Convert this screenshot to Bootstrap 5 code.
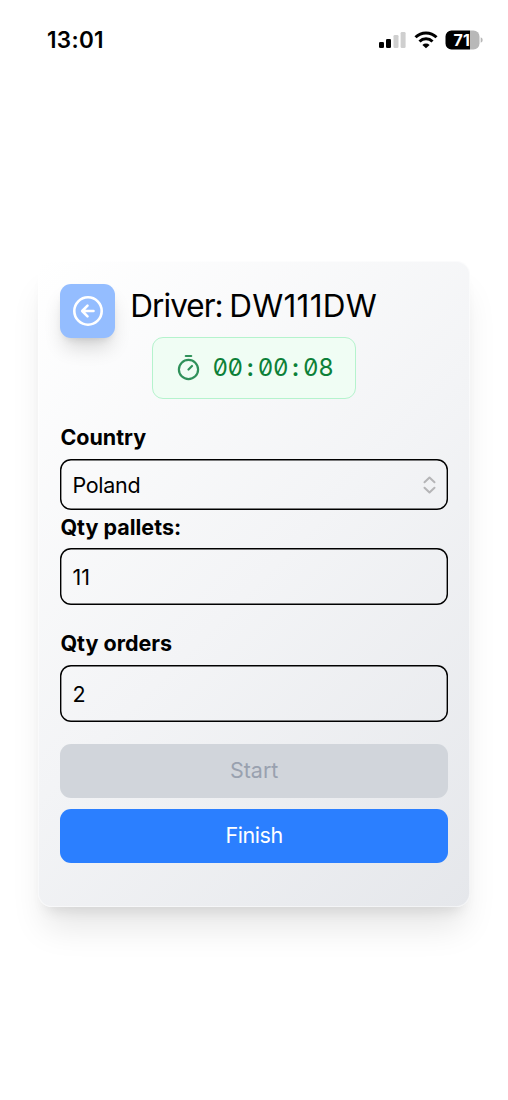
<!DOCTYPE html>
<html lang="en">
<head>
<meta charset="utf-8">
<meta name="viewport" content="width=device-width, initial-scale=1">
<title>Driver</title>
<link rel="stylesheet" href="https://cdn.jsdelivr.net/npm/bootstrap@5.3.0/dist/css/bootstrap.min.css">
<style>
body{font-family:Inter,"Liberation Sans",sans-serif;color:#000;background:#fff;height:1100px;overflow:hidden;font-size:21.5px}
.statusbar{height:80px;padding:0 25px 0 47px}
.clock{font-size:22.5px;font-weight:600;line-height:26px;letter-spacing:.3px}
.panel{margin:181px 38px 0;width:432px;height:646px;padding:22px 21.4px;border:1px solid rgba(255,255,255,.5);border-radius:14px;background:linear-gradient(135deg,#fff 0%,#f3f4f6 50%,#e5e7eb 100%);background-origin:border-box;box-shadow:0 27px 34px -7px rgba(0,0,0,.1),0 11px 14px -8px rgba(0,0,0,.1)}
.back{width:54.4px;height:54.4px;border:0;border-radius:11px;background:#94bdff;box-shadow:0 13px 20px -4px rgba(0,0,0,.16),0 5px 8px -5px rgba(0,0,0,.14)}
.title{font-size:31.5px;line-height:44px;font-weight:400;margin:0 0 0 15.5px;white-space:nowrap}
.title-key{letter-spacing:-.95px}
.title-id{letter-spacing:.25px;margin-left:6.5px}
.timer{width:204px;height:62px;margin:-1px auto 0;border:1px solid #b5f3cd;border-radius:11px;background:#f0fdf4;color:#0c8038}
.digits{font-size:24px;line-height:32px;font-feature-settings:"tnum","zero"}
.digits span{display:inline-block;width:15.1px;text-align:center}
.digits .sep{font-weight:600}
.field-label{font-weight:700;line-height:30px;font-size:21.5px;display:block}
.field{box-shadow:inset 0 0 0 1.4px #000;border-radius:11px;background:transparent;padding:1px 12px 0;width:387.5px}
.field>span{letter-spacing:-.3px}
.action{height:54px;border:0;border-radius:11px;width:387.5px;font-size:21.5px;padding:0}
.action.start{background:#d1d5db;color:#99a1af}
.action.finish{background:#2b7fff;color:#fff;margin-top:11px;letter-spacing:-.4px}
</style>
</head>
<body>
<header class="statusbar d-flex align-items-center justify-content-between">
<span class="clock">13:01</span>
<div class="d-flex align-items-center">
<svg width="28" height="20" viewBox="0 0 28 20"><rect x="1" y="12" width="5" height="6" rx="1.3"/><rect x="8" y="9" width="5" height="9" rx="1.3"/><rect x="15.500" y="5" width="5" height="13" rx="1.3" fill="#cfcfcf"/><rect x="22.600" y="2" width="5" height="16" rx="1.3" fill="#cfcfcf"/></svg>
<svg class="ms-2" width="24" height="20" viewBox="0 0 24 20"><g fill="none" stroke="#000" stroke-width="3"><path d="M1.5 7.200a15 15 0 0 1 21 0"/><path d="M5.500 11.500a9.300 9.300 0 0 1 13 0"/></g><path d="M12 18.200 8.400 14.900a5.100 5.100 0 0 1 7.200 0z"/></svg>
<svg style="margin-left:7px" width="38" height="20" viewBox="0 0 38 20"><path d="M25 .5h3.500a6 6 0 0 1 6 6v7a6 6 0 0 1-6 6H25z" fill="#b8b8b8"/><path d="M6.500.5H25v19H6.500a6 6 0 0 1-6-6v-7a6 6 0 0 1 6-6z"/><path d="M35.700 7.200q2 .8 2 2.800t-2 2.800z" fill="#b8b8b8"/><text x="8.500" y="15.800" font-family="Inter" font-size="16" font-weight="700" fill="#fff" textLength="16.500">71</text></svg>
</div>
</header>
<main class="panel">
<div class="d-flex align-items-start" style="height:54px">
<button class="back d-flex align-items-center justify-content-center p-0" aria-label="Back"><svg width="32" height="32" viewBox="0 0 32 32" fill="none" stroke="#fff" stroke-width="2.600" stroke-linecap="round" stroke-linejoin="round"><circle cx="16" cy="16" r="13.700"/><path d="M21.500 16H10.500M15.500 10.700 10.200 16l5.300 5.300"/></svg></button>
<h1 class="title"><span class="title-key">Driver:</span><span class="title-id">DW111DW</span></h1>
</div>
<div class="timer d-flex align-items-center">
<svg style="margin-left:24px" width="24" height="28" viewBox="0 0 24 28" fill="none" stroke="#2f915a" stroke-width="2.200" stroke-linecap="round"><path d="M8.800 2h5.400"/><circle cx="11.500" cy="15.500" r="9.600"/><path d="m11.500 15.500 3.500-3.500"/></svg>
<div class="digits d-flex" style="margin-left:11.5px"><span>0</span><span>0</span><span class="sep">:</span><span>0</span><span>0</span><span class="sep">:</span><span>0</span><span>8</span></div>
</div>
<label class="field-label" style="margin-top:23px">Country</label>
<div class="field d-flex align-items-center justify-content-between" style="height:51px;margin-top:7px"><span>Poland</span>
<svg width="13" height="18" viewBox="0 0 13 18" fill="none" stroke="#b5b5b7" stroke-width="2" stroke-linecap="round" stroke-linejoin="round"><path d="m1.500 6.300 5-4.800 5 4.800M1.500 11.700l5 4.800 5-4.800"/></svg></div>
<label class="field-label" style="margin-top:2px">Qty pallets:</label>
<div class="field d-flex align-items-center" style="height:57px;margin-top:6px">11</div>
<label class="field-label" style="margin-top:23px">Qty orders</label>
<div class="field d-flex align-items-center" style="height:56.5px;margin-top:7px">2</div>
<button class="action start d-block" style="margin-top:22px" disabled>Start</button>
<button class="action finish d-block">Finish</button>
</main>
<script src="https://cdn.jsdelivr.net/npm/bootstrap@5.3.0/dist/js/bootstrap.bundle.min.js"></script>
</body>
</html>
